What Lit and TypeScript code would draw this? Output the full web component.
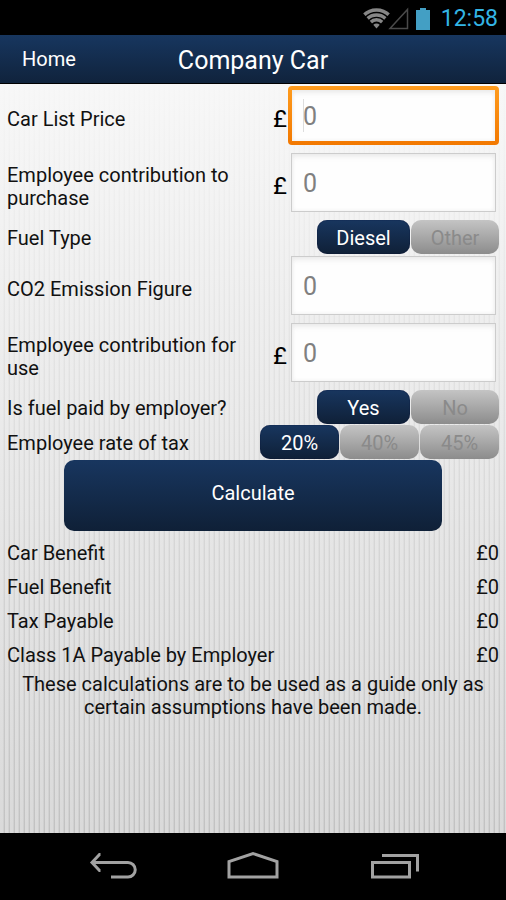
import { LitElement, html, css } from "lit";
import { customElement, property, state } from "lit/decorators.js";

@customElement("status-bar")
class StatusBar extends LitElement {
  static styles = css`
    :host {
      display: flex;
      justify-content: flex-end;
      align-items: center;
      height: 35px;
      padding-right: 8px;
      background: #000;
      color: #33b5e5;
      font-size: 23px;
    }
    svg {
      display: block;
      margin-right: 9px;
    }
    span {
      padding-top: 2px;
    }
  `;
  render() {
    return html`
      <svg width="70" height="24" viewBox="0 0 70 24" aria-hidden="true">
        <defs><clipPath id="fan"><path d="M14.500 22.500 L-0.500 5.500 V0 H29.500 V5.500 Z" /></clipPath></defs>
        <g clip-path="url(#fan)" fill="none" stroke="#868686" stroke-width="3.600">
          <circle cx="14.500" cy="22" r="18" />
          <circle cx="14.500" cy="22" r="13" />
          <circle cx="14.500" cy="22" r="8.200" />
          <circle cx="14.500" cy="22" r="2.200" stroke-width="4.500" />
        </g>
        <path d="M28 22.500 H45.500 V3.500 Z" fill="none" stroke="#4a4a4a" stroke-width="1.500" />
        <path d="M54 4 h4 v-2 h6 v2 h4 v20 h-14 Z" fill="#439fc4" />
      </svg>
      <span>12:58</span>
    `;
  }
}

@customElement("nav-bar")
class NavBar extends LitElement {
  static styles = css`
    :host {
      display: flex;
      justify-content: center;
      align-items: center;
      gap: 83px;
      height: 67px;
      background: #000;
    }
    button {
      display: block;
      padding: 3px 0 0;
      border: 0;
      background: none;
    }
    svg {
      display: block;
      fill: none;
      stroke: #a2a2a2;
      stroke-width: 3;
    }
  `;
  render() {
    return html`
      <button aria-label="Back">
        <svg width="58" height="36" viewBox="0 0 58 36">
          <path d="M10 12.500 H45 A7.200 7.200 0 0 1 45 27 H28" />
          <path d="M17.500 4.500 H16.500 L9 12.500 L16.500 20.500 H17.500" />
        </svg>
      </button>
      <button aria-label="Home screen">
        <svg width="58" height="36" viewBox="0 0 58 36">
          <path d="M5 27 V11.500 L29 3.500 L53 11.500 V27 Z" />
        </svg>
      </button>
      <button aria-label="Recent apps">
        <svg width="58" height="36" viewBox="0 0 58 36">
          <path d="M7.500 12.500 H44.500 V27 H7.500 Z M17 5.500 H52.500 V21.500" />
        </svg>
      </button>
    `;
  }
}

@customElement("segmented-choice")
class SegmentedChoice extends LitElement {
  @property({ attribute: false }) options: string[] = [];
  @property() label = "";
  @state() private selected = 0;

  static styles = css`
    .group {
      display: flex;
      gap: 1px;
    }
    button {
      width: 79px;
      height: 34px;
      padding: 2px 8px 0;
      border: 0;
      border-radius: 10px;
      background: linear-gradient(#c4c4c4, #8c8c8c);
      color: #8a8a8a;
      font: inherit;
    }
    .pair button {
      width: 88px;
    }
    .pair button:first-child {
      width: 93px;
    }
    button[aria-pressed="true"] {
      background: linear-gradient(#18365f, #0f2037);
      color: #fff;
      box-shadow: inset 0 0 1px #000830;
    }
  `;
  render() {
    return html`
      <div class="group ${this.options.length === 2 ? "pair" : ""}" role="group" aria-label=${this.label}>
        ${this.options.map(
          (name, i) => html`<button
            aria-pressed=${i === this.selected ? "true" : "false"}
            @click=${() => (this.selected = i)}
          >${name}</button>`
        )}
      </div>
    `;
  }
}

const RESULTS = ["Car Benefit", "Fuel Benefit", "Tax Payable", "Class 1A Payable by Employer"];

@customElement("app-root")
class AppRoot extends LitElement {
  static styles = css`
    :host {
      display: flex;
      flex-direction: column;
      min-height: 100vh;
      font-family: Roboto, "Liberation Sans", sans-serif;
      font-size: 20px;
      line-height: 23px;
      color: #111;
    }
    header {
      display: grid;
      grid-template-columns: 1fr auto 1fr;
      align-items: center;
      height: 48px;
      border-bottom: 1px solid #000;
      background: linear-gradient(#17365f, #10233c);
      color: #fff;
    }
    header a {
      padding-left: 22px;
      color: inherit;
      text-decoration: none;
    }
    h1 {
      margin: 0;
      padding-top: 4px;
      font-size: 25px;
      line-height: 30px;
      font-weight: 400;
    }
    main {
      flex: 1;
      padding: 2px 7px 16px;
      background:
        linear-gradient(rgba(249, 249, 249, 0.95), rgba(218, 218, 218, 0)),
        repeating-linear-gradient(90deg, #dadada 0 3px, #d0d0d0 3px 4px, #c2c2c2 4px 5px);
    }
    .row {
      display: flex;
      align-items: center;
      min-height: 34px;
      margin-bottom: 8px;
    }
    .tight {
      margin-bottom: 2px;
    }
    .snug {
      margin-bottom: 1px;
    }
    .row label,
    .row .name {
      flex: 1;
      min-width: 0;
    }
    .name {
      padding-top: 2px;
    }
    .entry label,
    .pound {
      padding-top: 8px;
    }
    .pound {
      width: 15px;
      font-size: 24px;
      color: #000;
    }
    .label-text {
      display: block;
      max-width: 240px;
    }
    .field {
      box-sizing: border-box;
      width: 211px;
      padding: 0 3px;
    }
    input {
      display: block;
      box-sizing: border-box;
      width: 100%;
      height: 59px;
      padding: 2px 11px 0;
      border: 1px solid #ccc;
      border-radius: 0;
      outline: none;
      background: #fefefe;
      box-shadow: inset 0 4px 6px -2px #e8e8e8, inset 0 0 4px #eee;
      font: inherit;
      font-size: 25px;
    }
    input::placeholder {
      color: #808080;
      opacity: 1;
    }
    .active {
      padding: 0;
    }
    .active input {
      border: 4px solid transparent;
      border-radius: 4px;
      background:
        linear-gradient(#ddd, #ddd) 11px 9px / 1px 33px no-repeat padding-box,
        linear-gradient(#fefefe, #fefefe) padding-box,
        linear-gradient(#ff9c1e, #f27800) border-box;
    }
    .calculate {
      display: block;
      width: 77%;
      height: 71px;
      margin: 0 auto 5px;
      padding: 0 0 5px;
      border: 0;
      border-radius: 10px;
      background: linear-gradient(#18365f, #0f2037);
      color: #fff;
      font: inherit;
    }
    table {
      width: 100%;
      border-collapse: collapse;
    }
    th,
    td {
      height: 33px;
      padding: 1px 0 0;
      font-weight: 400;
      text-align: left;
    }
    td {
      text-align: right;
    }
    p {
      margin: 1px 0 0;
      text-align: center;
    }
  `;

  private entry(id: string, text: string, pound: boolean, active = false) {
    return html`
      <div class="row entry">
        <label for=${id}><span class="label-text">${text}</span></label>
        ${pound ? html`<span class="pound">£</span>` : ""}
        <div class="field ${active ? "active" : ""}">
          <input id=${id} inputmode="decimal" placeholder="0" />
        </div>
      </div>
    `;
  }

  render() {
    return html`
      <status-bar></status-bar>
      <header>
        <a href="#home">Home</a>
        <h1>Company Car</h1>
      </header>
      <main>
        ${this.entry("price", "Car List Price", true, true)}
        ${this.entry("purchase", "Employee contribution to purchase", true)}
        <div class="row tight">
          <span class="name">Fuel Type</span>
          <segmented-choice label="Fuel Type" .options=${["Diesel", "Other"]}></segmented-choice>
        </div>
        ${this.entry("co2", "CO2 Emission Figure", false)}
        ${this.entry("use", "Employee contribution for use", true)}
        <div class="row snug">
          <span class="name">Is fuel paid by employer?</span>
          <segmented-choice label="Is fuel paid by employer?" .options=${["Yes", "No"]}></segmented-choice>
        </div>
        <div class="row snug">
          <span class="name">Employee rate of tax</span>
          <segmented-choice label="Employee rate of tax" .options=${["20%", "40%", "45%"]}></segmented-choice>
        </div>
        <button class="calculate">Calculate</button>
        <table>
          ${RESULTS.map((name) => html`<tr><th scope="row">${name}</th><td>£0</td></tr>`)}
        </table>
        <p>These calculations are to be used as a guide only as certain assumptions have been made.</p>
      </main>
      <nav-bar></nav-bar>
    `;
  }
}
